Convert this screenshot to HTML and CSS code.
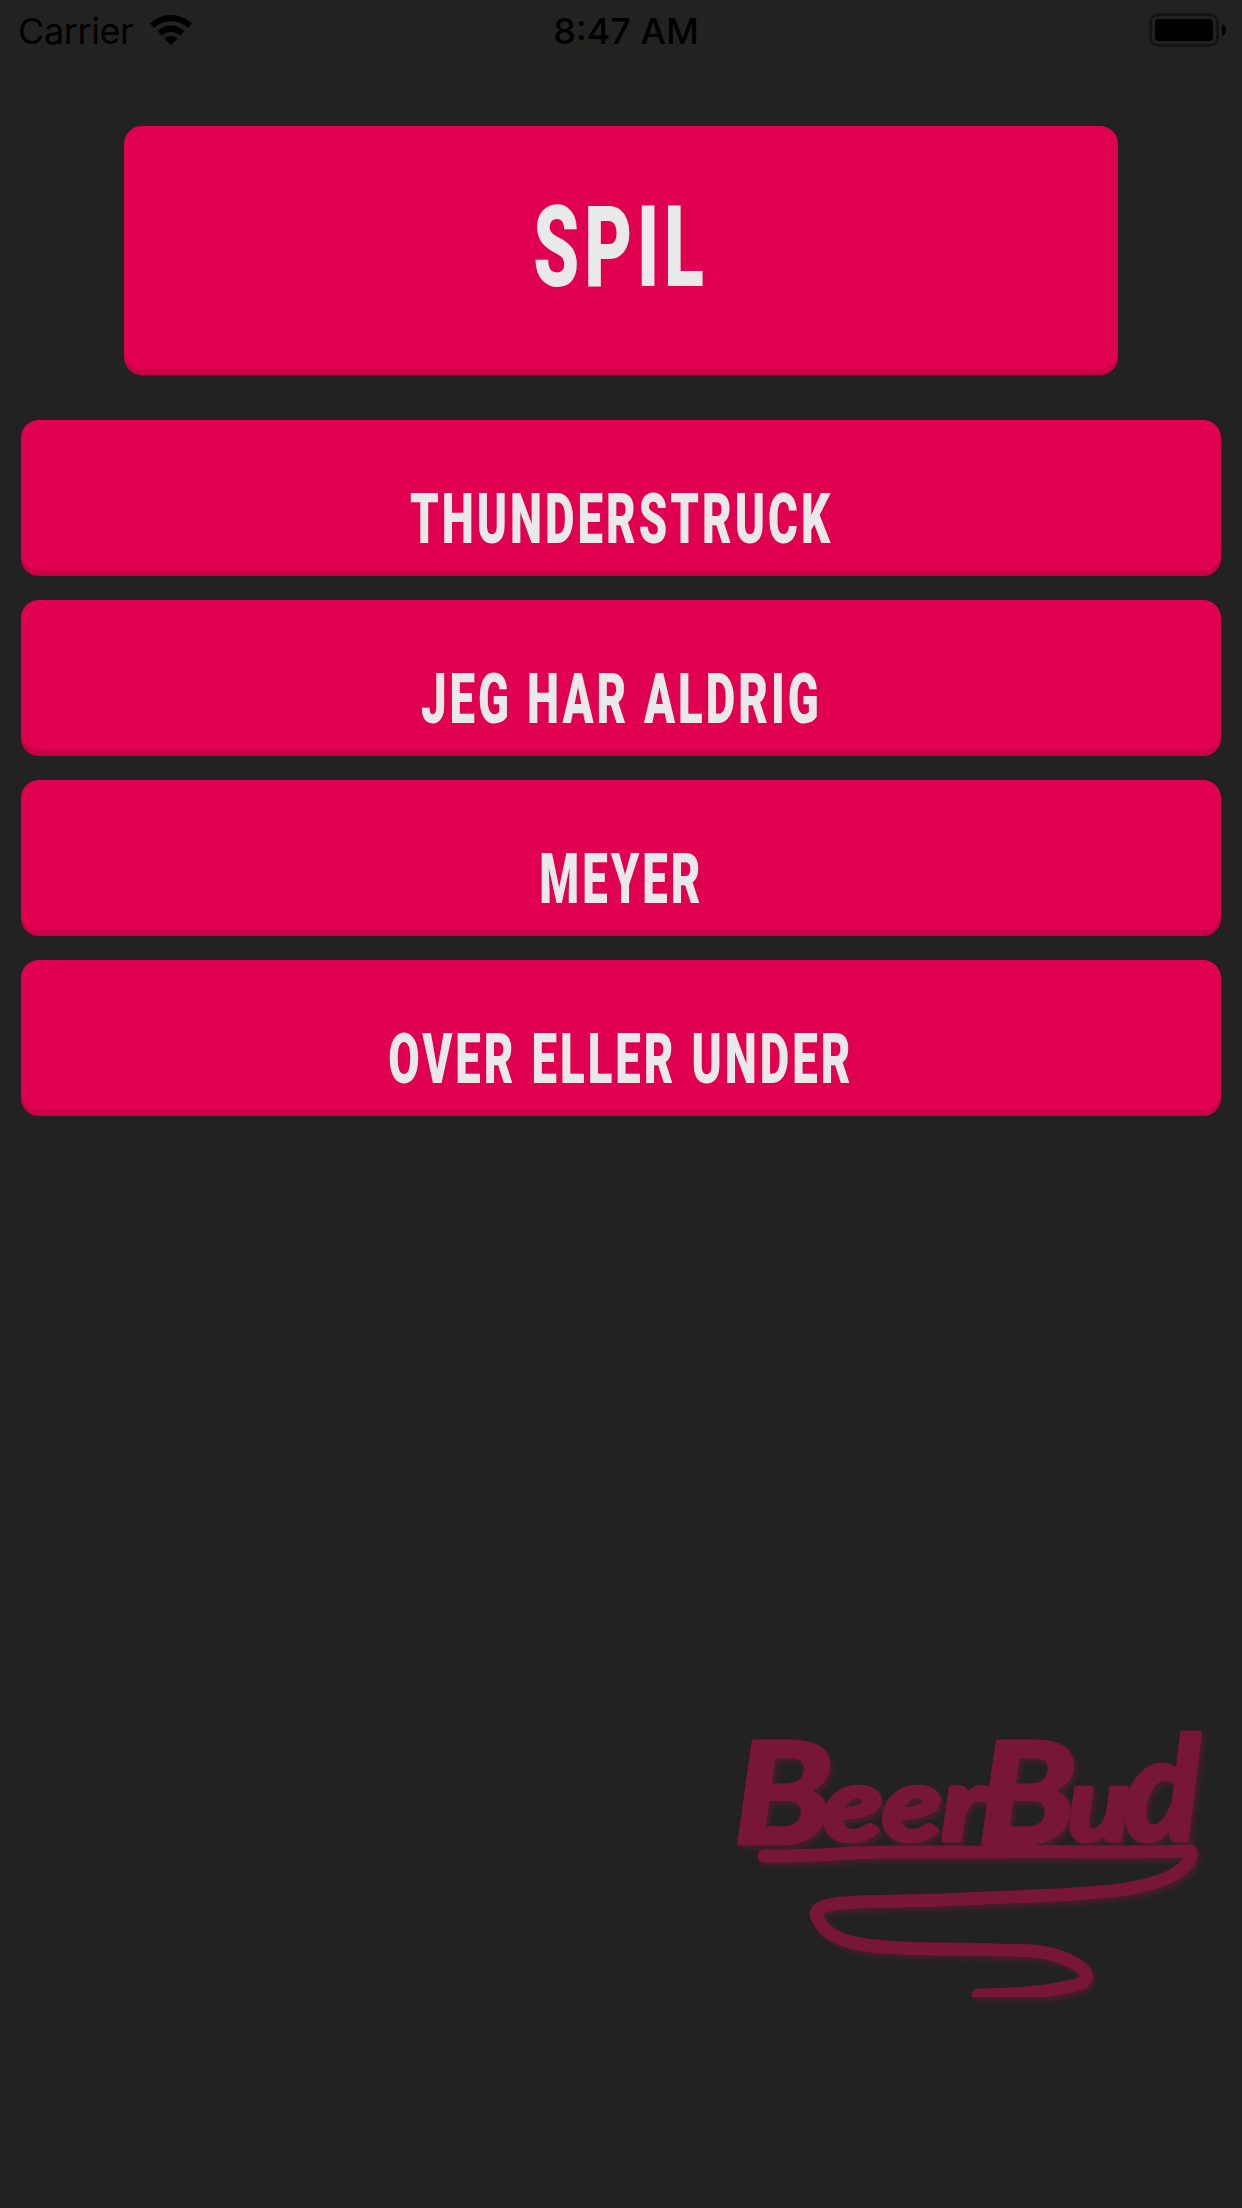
FILE: index.html
```
<!DOCTYPE html>
<html lang="da">
<head>
    <meta charset="UTF-8">
    <meta name="viewport" content="width=device-width, initial-scale=1.0">
    <title>BeerBud</title>
    <link rel="stylesheet" href="styles.css">
</head>
<body>
    <header class="statusbar">
        <div class="carrier">
            <span>Carrier</span>
            <svg class="wifi" width="44" height="32" viewBox="0 0 44 32">
                <path d="M1 9.5 A30 30 0 0 1 43 9.5 L39 14 A24.500 24.500 0 0 0 5 14 Z"/>
                <path d="M8.500 17 A19.500 19.500 0 0 1 35.500 17 L31 21.500 A13.500 13.500 0 0 0 13 21.500 Z"/>
                <path d="M15.500 24.500 A10 10 0 0 1 28.500 24.500 L22 31 Z"/>
            </svg>
        </div>
        <div class="time">8:47 AM</div>
        <div class="power">
            <div class="battery"><div class="charge"></div></div>
            <svg width="4" height="12" viewBox="0 0 4 12"><path d="M0 0 Q4 2 4 6 Q4 10 0 12 Z"/></svg>
        </div>
    </header>

    <main>
        <h1 class="title"><span>Spil</span></h1>

        <nav class="games">
            <button><span>Thunderstruck</span></button>
            <button><span>Jeg har aldrig</span></button>
            <button><span>Meyer</span></button>
            <button><span>Over eller under</span></button>
        </nav>
    </main>

    <footer>
        <svg class="logo" width="542" height="317" viewBox="0 -20 542 317">
            <g class="logo-text">
                <text x="34" y="143" class="big" textLength="98" lengthAdjust="spacingAndGlyphs">B</text>
                <text x="123" y="140" class="small" textLength="162" lengthAdjust="spacingAndGlyphs">eer</text>
                <text x="278" y="143" class="big" textLength="98" lengthAdjust="spacingAndGlyphs">B</text>
                <text x="368" y="140" class="small" textLength="62" lengthAdjust="spacingAndGlyphs">u</text>
                <text x="424" y="140" class="last" textLength="76" lengthAdjust="spacingAndGlyphs">d</text>
            </g>
            <path class="swirl" d="M64 156 C110 157 150 152 190 152 L300 152 C350 150 400 154 491 151 C493 168 465 187 400 192 C360 196 320 196 242 200 L156 202 C122 204 112 208 118 219 C125 234 142 241 160 244 C205 251 250 248 294 250 C330 250 348 251 366 259 C390 269 394 282 372 286 C345 292 320 295 278 295"/>
        </svg>
    </footer>
</body>
</html>
```
FILE: styles.css
```
* {
    box-sizing: border-box;
}

body {
    margin: 0;
    height: 2208px;
    display: flex;
    flex-direction: column;
    background-color: #222222;
    font-family: Roboto, sans-serif;
}

.statusbar {
    height: 60px;
    padding: 0 16px 0 18px;
    display: grid;
    grid-template-columns: 1fr auto 1fr;
    align-items: center;
    font-family: Inter, sans-serif;
    font-size: 36px;
    color: black;
}

.carrier {
    display: flex;
    align-items: center;
    gap: 16px;
    line-height: 62px;
    letter-spacing: -0.4px;
}

.wifi {
    margin-bottom: 3px;
}

.time {
    font-weight: 550;
    line-height: 62px;
    padding-left: 8px;
}

.power {
    display: flex;
    align-items: center;
    justify-content: flex-end;
    gap: 3px;
    padding-bottom: 2px;
}

.battery {
    width: 70px;
    height: 34px;
    padding: 3px;
    border: 3px solid #151515;
    border-radius: 9px;
}

.charge {
    height: 22px;
    border-radius: 4px;
    background-color: black;
}

.title {
    width: 994px;
    height: 249px;
    margin: 66px auto 45px;
    padding-bottom: 7px;
    font-size: 113px;
}

.title,
.games button {
    display: flex;
    align-items: center;
    justify-content: center;
    border: none;
    border-radius: 18px;
    background-color: #e0004f;
    box-shadow: inset 0 -6px rgba(0, 0, 0, 0.1);
    color: #e9e9e9;
    font-family: Roboto, sans-serif;
    font-weight: 900;
    text-transform: uppercase;
    white-space: nowrap;
}

.title span,
.games span {
    letter-spacing: 0.067em;
    word-spacing: 0.01em;
    transform: scaleX(0.65);
}

.games {
    display: flex;
    flex-direction: column;
    gap: 24px;
    padding: 0 21px;
}

.games button {
    height: 156px;
    padding: 41px 0 0;
    font-size: 70px;
}

footer {
    margin-top: auto;
    padding-bottom: 211px;
    display: flex;
    justify-content: flex-end;
}

.logo {
    display: block;
    filter: drop-shadow(3px 4px 2px rgba(119, 22, 54, 0.4));
}

.logo-text {
    font-family: Lato, sans-serif;
    font-style: italic;
    font-weight: 700;
    fill: #771636;
    stroke: #771636;
    stroke-width: 5;
    stroke-linejoin: round;
}

.big {
    font-size: 140px;
}

.small {
    font-size: 102px;
}

.last {
    font-size: 144px;
}

.swirl {
    fill: none;
    stroke: #771636;
    stroke-width: 13;
    stroke-linecap: round;
    stroke-linejoin: round;
}
```
